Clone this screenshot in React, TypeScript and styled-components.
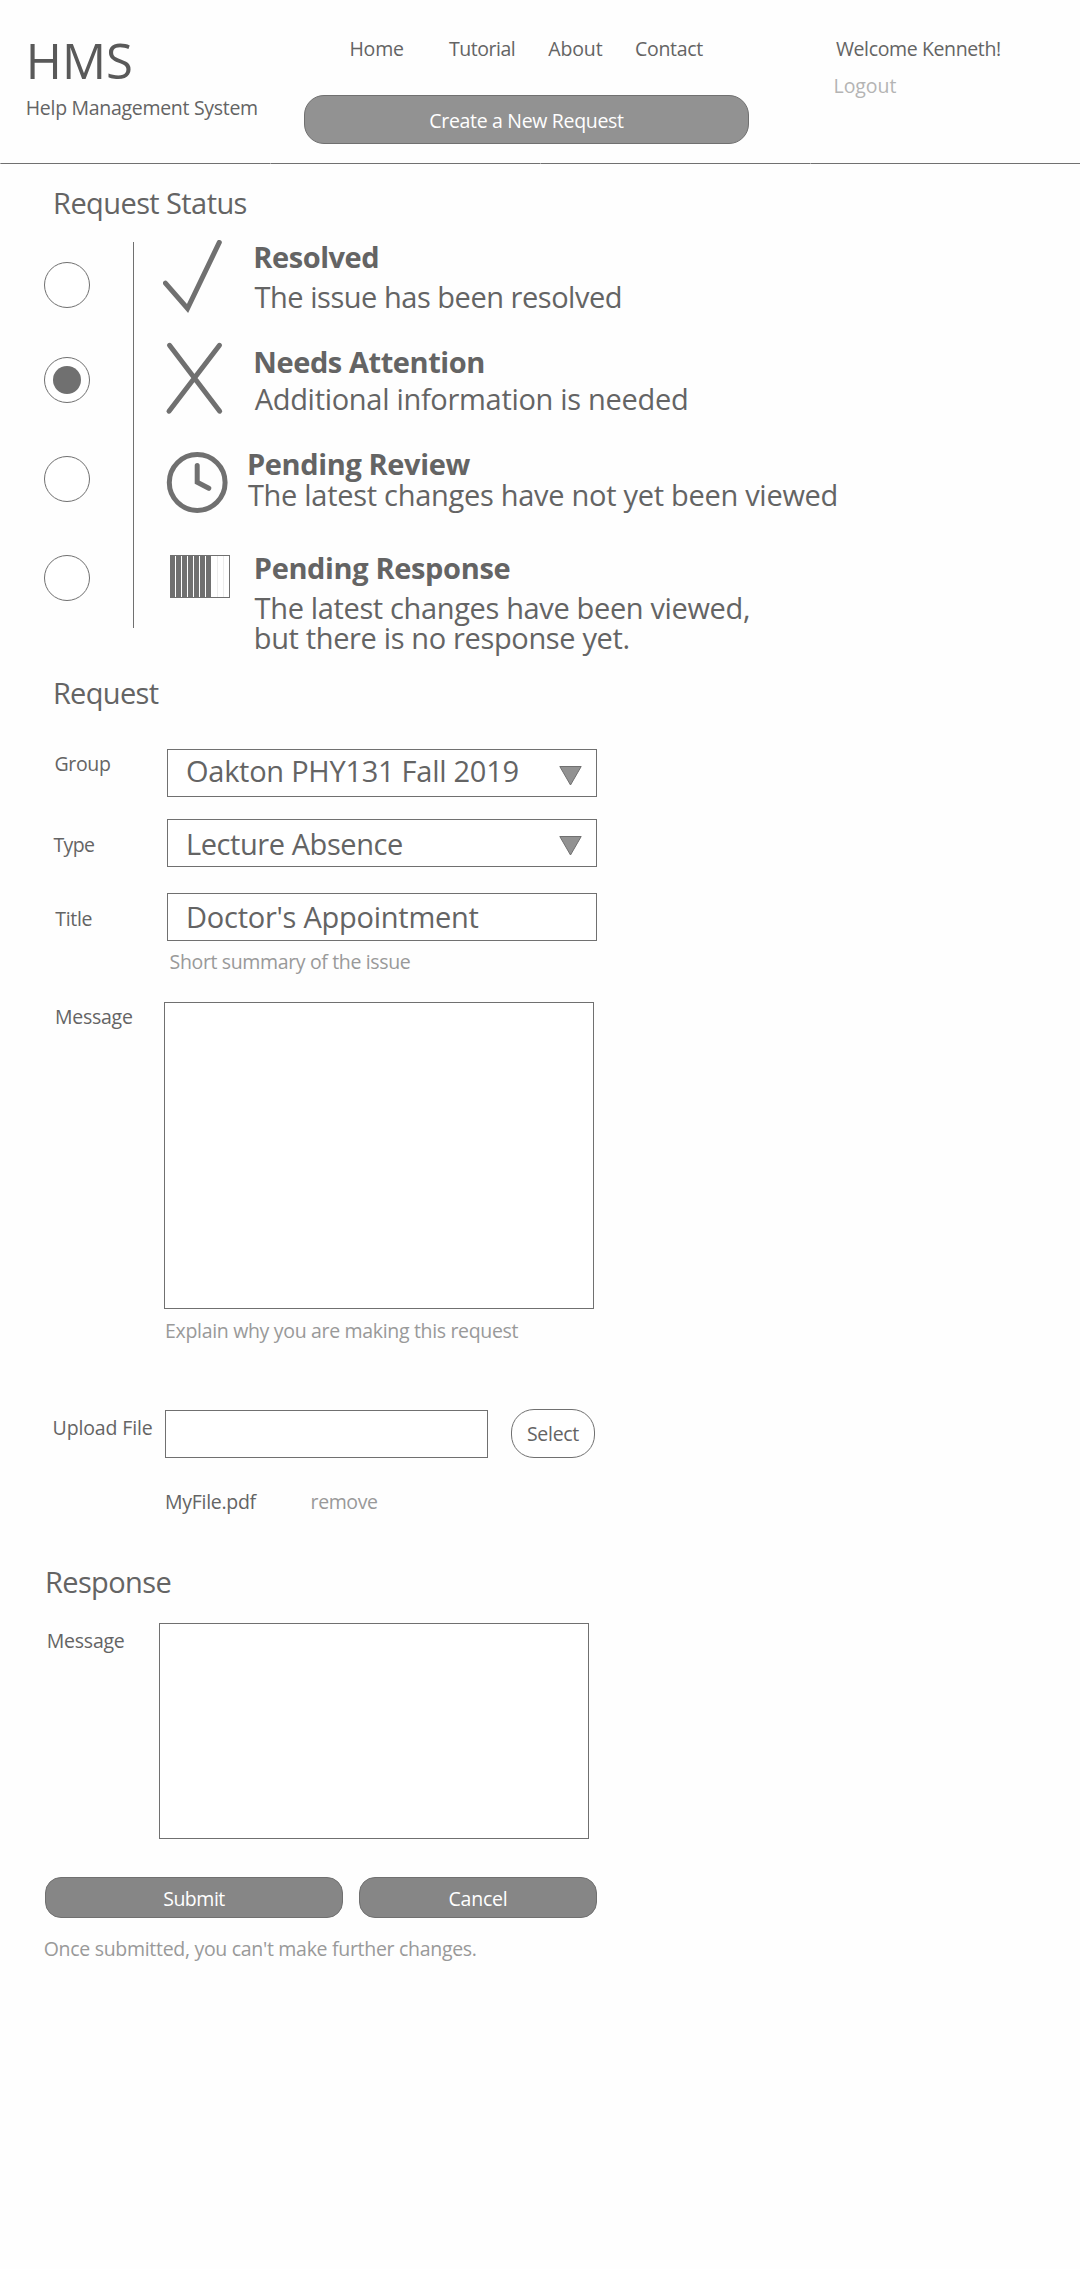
import React, { useState } from 'react';
import styled, { createGlobalStyle } from 'styled-components';

const color = {
  page: '#fefefe',
  stroke: '#707070',
  brand: '#595959',
  text: '#646464',
  hint: '#999999',
  faint: '#b4b4b4',
  primary: '#929292',
  action: '#868686',
};

const GlobalStyle = createGlobalStyle`
  * { box-sizing: border-box; }
  body {
    margin: 0;
    background: ${color.page};
    color: ${color.text};
    font-family: "Open Sans", "Noto Sans", sans-serif;
  }
  button { font-family: inherit; cursor: pointer; padding: 0; }
`;

const Page = styled.div`
  width: 1080px;
  min-height: 2269px;
  display: flex;
  flex-direction: column;
`;

/* ---------- type ---------- */

type TypeProps = { $ls?: number; $x?: number; $y?: number };

const Small = styled.span<TypeProps & { $tone?: string }>`
  display: block;
  font-size: 19.5px;
  line-height: 27px;
  white-space: nowrap;
  color: ${p => p.$tone ?? color.text};
  letter-spacing: ${p => p.$ls ?? -0.32}px;
  margin-left: ${p => p.$x ?? 0}px;
  margin-top: ${p => p.$y ?? 0}px;
`;

const Large = styled.span<TypeProps>`
  display: block;
  font-size: 29px;
  line-height: 33px;
  white-space: nowrap;
  letter-spacing: ${p => p.$ls ?? -0.35}px;
  margin-left: ${p => p.$x ?? 0}px;
  margin-top: ${p => p.$y ?? 0}px;
`;

const Heading = styled(Large).attrs({ as: 'h2' })`
  font-weight: 400;
  margin-bottom: 0;
`;

/* ---------- header ---------- */

const Header = styled.header`
  display: flex;
  align-items: flex-start;
  height: 164px;
  background: repeating-linear-gradient(to right, #a4a4a4 0 1px, ${color.stroke} 1px 270px) bottom / 100% 1px no-repeat;
`;

const Brand = styled.div`
  width: 304px;
  padding: 27px 0 0 25.8px;
`;

const Logo = styled.h1`
  margin: 0 0 1px;
  font-size: 49px;
  font-weight: 400;
  line-height: 66px;
  letter-spacing: 0;
  color: ${color.brand};
`;

const Center = styled.div`
  width: 445px;
  padding-top: 35px;
`;

const Nav = styled.nav`
  display: grid;
  grid-template-columns: 99.6px 99.3px 86.8px auto;
  padding-left: 45.4px;
`;

const PillButton = styled.button<{ $fill: string; $w: number; $h: number; $r: number }>`
  display: flex;
  align-items: center;
  justify-content: center;
  width: ${p => p.$w}px;
  height: ${p => p.$h}px;
  border: 1px solid ${color.stroke};
  border-radius: ${p => p.$r}px;
  background: ${p => p.$fill};
`;

const CreateButton = styled(PillButton)`
  margin-top: 33px;
  padding-top: 2px;
`;

const User = styled.div`
  padding: 35px 0 0 84.6px;
`;

/* ---------- status ---------- */

const StatusList = styled.section`
  display: flex;
  align-items: flex-start;
  height: 457px;
  margin-top: 21px;
`;

const Radios = styled.div`
  display: flex;
  flex-direction: column;
  width: 133px;
  padding: 22px 0 0 44px;
`;

const Radio = styled.button<{ $gap: number }>`
  display: grid;
  place-items: center;
  width: 46px;
  height: 46px;
  margin-bottom: ${p => p.$gap}px;
  border: 1px solid ${color.stroke};
  border-radius: 50%;
  background: #fff;
`;

const Dot = styled.span`
  width: 28px;
  height: 28px;
  border-radius: 50%;
  background: ${color.stroke};
`;

const Divider = styled.div`
  width: 1px;
  height: 386px;
  margin-top: 2px;
  background: ${color.stroke};
`;

const StatusRows = styled.div`
  padding-left: 29px;
`;

const StatusRow = styled.div<{ $h: number; $iconY?: number; $textY?: number; $textX?: number }>`
  display: flex;
  align-items: flex-start;
  height: ${p => p.$h}px;
  svg {
    flex: none;
    margin-top: ${p => p.$iconY ?? 0}px;
    fill: none;
    stroke: ${color.stroke};
    stroke-width: 5;
    stroke-linecap: round;
  }
  > div {
    padding: ${p => p.$textY ?? 0}px 0 0 ${p => p.$textX ?? 22}px;
  }
`;

const StatusTitle = styled(Large)`
  font-weight: 700;
`;

const Bar = styled.rect`
  stroke: none;
  fill: ${color.stroke};
`;

const EmptyBar = styled(Bar)`
  fill: #ececec;
`;

const Frame = styled.rect`
  stroke-width: 1px;
  fill: #fff;
`;

/* ---------- form ---------- */

const Row = styled.div<{ $mt: number }>`
  display: flex;
  align-items: flex-start;
  margin-top: ${p => p.$mt}px;
`;

const Label = styled.label<{ $w: number; $x: number; $y: number }>`
  flex: none;
  width: ${p => p.$w}px;
  padding: ${p => p.$y}px 0 0 ${p => p.$x}px;
`;

const Field = styled.div<{ $y?: number }>`
  display: flex;
  align-items: flex-start;
  justify-content: space-between;
  width: 430px;
  height: 48px;
  padding: ${p => p.$y ?? 0}px 14px 0 18px;
  border: 1px solid ${color.stroke};
  background: #fff;
`;

const Arrow = styled.svg<{ $y: number }>`
  display: block;
  margin-top: ${p => p.$y}px;
`;

const TextArea = styled.textarea<{ $h: number }>`
  display: block;
  width: 430px;
  height: ${p => p.$h}px;
  padding: 12px 18px;
  border: 1px solid ${color.stroke};
  background: #fff;
  resize: none;
  outline: none;
  font: inherit;
`;

const FileBox = styled.div`
  width: 323px;
  height: 48px;
  margin: 1px 23px 0 0;
  border: 1px solid ${color.stroke};
  background: #fff;
`;

const FileRow = styled.div`
  display: grid;
  grid-template-columns: 145.5px auto;
  justify-content: start;
  margin-top: 30px;
  padding-left: 165.1px;
`;

const Actions = styled.div`
  display: flex;
  gap: 16px;
  margin-top: 38px;
  padding-left: 45px;
  ${PillButton} { padding-top: 2px; }
`;

function DownArrow({ y }: { y: number }) {
  return (
    <Arrow $y={y} width="23" height="20" viewBox="0 0 23 20">
      <path d="M0.8 0.5H22.2L11.5 19Z" fill={color.primary} stroke={color.stroke} strokeWidth="1" />
    </Arrow>
  );
}

const CheckIcon = () => (
  <svg width="68" height="74" viewBox="0 0 68 74">
    <path d="M2.4 43.2L24.5 68.5L56.3 2.4" />
  </svg>
);

const CrossIcon = () => (
  <svg width="68" height="74" viewBox="0 0 68 74">
    <path d="M6.5 4.3L56.7 70.2M56.5 4.3L6 70.2" />
  </svg>
);

const ClockIcon = () => (
  <svg width="68" height="62" viewBox="0 0 68 62">
    <circle cx="34.2" cy="31.5" r="27.9" />
    <path d="M34.2 14.5V31.2L45.8 37.3" />
  </svg>
);

const ProgressIcon = () => (
  <svg width="68" height="43" viewBox="0 0 68 43">
    <Frame x="7.5" y="0.5" width="59" height="42" />
    {[0, 1, 2, 3, 4, 5, 6].map(i => (
      <Bar key={i} x={7 + i * 6} y="0.5" width="5" height="42" />
    ))}
    {[54, 60].map(x => (
      <EmptyBar key={x} x={x} y="1" width="1" height="41" />
    ))}
  </svg>
);

const radioGaps = [49, 53, 53, 0];
const statusNames = ['Resolved', 'Needs Attention', 'Pending Review', 'Pending Response'];

export default function App() {
  const [status, setStatus] = useState(1);
  return (
    <Page>
      <GlobalStyle />
      <Header>
        <Brand>
          <Logo>HMS</Logo>
          <Small $ls={-0.3}>Help Management System</Small>
        </Brand>
        <Center>
          <Nav>
            <Small $ls={-0.15}>Home</Small>
            <Small $ls={-0.47}>Tutorial</Small>
            <Small $ls={-0.14}>About</Small>
            <Small>Contact</Small>
          </Nav>
          <CreateButton $fill={color.primary} $w={445} $h={49} $r={20}>
            <Small $tone="#fff">Create a New Request</Small>
          </CreateButton>
        </Center>
        <User>
          <Small $x={2.3} $ls={-0.37}>Welcome Kenneth!</Small>
          <Small $y={10} $ls={-0.08} $tone={color.faint}>Logout</Small>
        </User>
      </Header>

      <Heading $x={53.1} $y={22} $ls={-0.59}>Request Status</Heading>
      <StatusList>
        <Radios role="radiogroup">
          {statusNames.map((name, i) => (
            <Radio key={name} role="radio" aria-label={name} aria-checked={status === i} $gap={radioGaps[i]} onClick={() => setStatus(i)}>
              {status === i && <Dot />}
            </Radio>
          ))}
        </Radios>
        <Divider />
        <StatusRows>
          <StatusRow $h={101}>
            <CheckIcon />
            <div>
              <StatusTitle $x={0.3} $ls={-0.45}>Resolved</StatusTitle>
              <Large $x={1.5} $y={7} $ls={-0.47}>The issue has been resolved</Large>
            </div>
          </StatusRow>
          <StatusRow $h={106} $textY={4}>
            <CrossIcon />
            <div>
              <StatusTitle $x={0.3} $ls={-0.42}>Needs Attention</StatusTitle>
              <Large $x={1.7} $y={4} $ls={-0.3}>Additional information is needed</Large>
            </div>
          </StatusRow>
          <StatusRow $h={104} $iconY={4} $textX={16}>
            <ClockIcon />
            <div>
              <StatusTitle $ls={-0.38}>Pending Review</StatusTitle>
              <Large $x={0.9} $y={-2} $ls={-0.287}>The latest changes have not yet been viewed</Large>
            </div>
          </StatusRow>
          <StatusRow $h={103} $iconY={4}>
            <ProgressIcon />
            <div>
              <StatusTitle $x={0.8} $ls={-0.36}>Pending Response</StatusTitle>
              <Large $x={1.6} $y={7} $ls={-0.354}>The latest changes have been viewed,</Large>
              <Large $x={0.8} $y={-3} $ls={-0.355}>but there is no response yet.</Large>
            </div>
          </StatusRow>
        </StatusRows>
      </StatusList>

      <Heading $x={52.9} $y={-21} $ls={-0.67}>Request</Heading>
      <Row $mt={40}>
        <Label $w={167} $x={54.4} $y={1}><Small>Group</Small></Label>
        <Field $y={4}>
          <Large $ls={-0.265}>Oakton PHY131 Fall 2019</Large>
          <DownArrow y={12} />
        </Field>
      </Row>
      <Row $mt={22}>
        <Label $w={167} $x={53.4} $y={12}><Small $ls={-0.6}>Type</Small></Label>
        <Field $y={7}>
          <Large $ls={-0.43}>Lecture Absence</Large>
          <DownArrow y={9} />
        </Field>
      </Row>
      <Row $mt={26}>
        <Label $w={167} $x={55.3} $y={12}><Small>Title</Small></Label>
        <div>
          <Field $y={6}>
            <Large $ls={-0.25}>Doctor's Appointment</Large>
          </Field>
          <Small $x={2.6} $y={7} $ls={-0.357} $tone={color.hint}>Short summary of the issue</Small>
        </div>
      </Row>
      <Row $mt={27}>
        <Label $w={164} $x={55} $y={1}><Small $ls={-0.27}>Message</Small></Label>
        <div>
          <TextArea $h={307} aria-label="Message" />
          <Small $x={1.1} $y={8} $ls={-0.325} $tone={color.hint}>Explain why you are making this request</Small>
        </div>
      </Row>
      <Row $mt={65}>
        <Label $w={165} $x={52.6} $y={5}><Small $ls={-0.14}>Upload File</Small></Label>
        <FileBox />
        <PillButton $fill="#fff" $w={84} $h={49} $r={23}>
          <Small $ls={-0.29}>Select</Small>
        </PillButton>
      </Row>
      <FileRow>
        <Small $ls={-0.3}>MyFile.pdf</Small>
        <Small $ls={-0.41} $tone={color.hint}>remove</Small>
      </FileRow>

      <Heading $x={45} $y={50} $ls={-0.63}>Response</Heading>
      <Row $mt={25}>
        <Label $w={159} $x={46.7} $y={4}><Small $ls={-0.22}>Message</Small></Label>
        <TextArea $h={216} aria-label="Response message" />
      </Row>
      <Actions>
        <PillButton $fill={color.action} $w={298} $h={41} $r={16}><Small $tone="#fff" $ls={-0.49}>Submit</Small></PillButton>
        <PillButton $fill={color.action} $w={238} $h={41} $r={16}><Small $tone="#fff" $ls={-0.23}>Cancel</Small></PillButton>
      </Actions>
      <Small $x={43.7} $y={17} $ls={-0.3} $tone={color.hint}>Once submitted, you can't make further changes.</Small>
    </Page>
  );
}
